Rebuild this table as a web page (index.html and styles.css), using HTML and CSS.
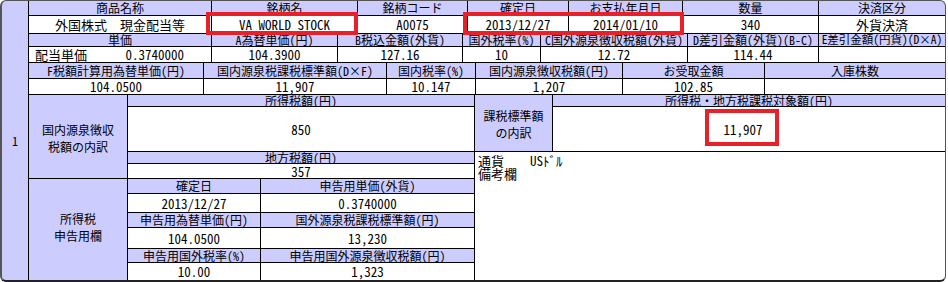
FILE: index.html
```html
<!DOCTYPE html>
<html lang="ja">
<head>
<meta charset="utf-8">
<link rel="stylesheet" href="styles.css">
</head>
<body>
<div class="wrap">
  <div class="frame">
    <div class="num">1</div>
    <div class="main">
      <div class="band band-a">
        <div class="h">商品名称</div>
        <div class="h">銘柄名</div>
        <div class="h">銘柄コード</div>
        <div class="h">確定日</div>
        <div class="h">お支払年月日</div>
        <div class="h">数量</div>
        <div class="h">決済区分</div>
        <div class="v">外国株式<span class="fw">　</span>現金配当等</div>
        <div class="v">VA WORLD STOCK</div>
        <div class="v">A0075</div>
        <div class="v">2013/12/27</div>
        <div class="v">2014/01/10</div>
        <div class="v">340</div>
        <div class="v">外貨決済</div>
      </div>
      <div class="band band-b">
        <div class="h">単価</div>
        <div class="h">A為替単価(円)</div>
        <div class="h">B税込金額(外貨)</div>
        <div class="h">国外税率(%)</div>
        <div class="h">C国外源泉徴収税額(外貨)</div>
        <div class="h">D差引金額(外貨)(B-C)</div>
        <div class="h tight">E差引金額(円貨)(D×A)</div>
        <div class="v split"><span>配当単価</span><span>0.3740000</span></div>
        <div class="v">104.3900</div>
        <div class="v">127.16</div>
        <div class="v">10</div>
        <div class="v">12.72</div>
        <div class="v">114.44</div>
        <div class="v"></div>
      </div>
      <div class="band band-c">
        <div class="h">F税額計算用為替単価(円)</div>
        <div class="h">国内源泉税課税標準額(D×F)</div>
        <div class="h">国内税率(%)</div>
        <div class="h">国内源泉徴収税額(円)</div>
        <div class="h">お受取金額</div>
        <div class="h">入庫株数</div>
        <div class="v">104.0500</div>
        <div class="v">11,907</div>
        <div class="v">10.147</div>
        <div class="v">1,207</div>
        <div class="v">102.85</div>
        <div class="v"></div>
      </div>
      <div class="band band-d">
        <div class="h label lbl-dom">国内源泉徴収<br>税額の内訳</div>
        <div class="h mid r1">所得税額(円)</div>
        <div class="v mid r2">850</div>
        <div class="h mid r3">地方税額(円)</div>
        <div class="v mid r4">357</div>

        <div class="h label lbl-base">課税標準額<br>の内訳</div>
        <div class="h rt r1">所得税・地方税課税対象額(円)</div>
        <div class="v rt r2">11,907</div>
        <div class="remarks">通貨<span class="fw">　　</span>USﾄﾞﾙ<br>備考欄</div>

        <div class="h label lbl-dec">所得税<br>申告用欄</div>
        <div class="h c2 r5">確定日</div>
        <div class="h c3 r5">申告用単価(外貨)</div>
        <div class="v c2 r6">2013/12/27</div>
        <div class="v c3 r6">0.3740000</div>
        <div class="h c2 r7">申告用為替単価(円)</div>
        <div class="h c3 r7">国外源泉税課税標準額(円)</div>
        <div class="v c2 r8">104.0500</div>
        <div class="v c3 r8">13,230</div>
        <div class="h c2 r9">申告用国外税率(%)</div>
        <div class="h c3 r9">申告用国外源泉徴収税額(円)</div>
        <div class="v c2 r10">10.00</div>
        <div class="v c3 r10">1,323</div>
      </div>
    </div>
  </div>
  <div class="mark mark-name"></div>
  <div class="mark mark-date"></div>
  <div class="mark mark-amount"></div>
</div>
</body>
</html>
```

FILE: styles.css
```css
html, body {
  margin: 0;
  padding: 0;
  background: #ffffff;
}

body {
  font-family: "Noto Sans CJK JP", "Noto Sans", sans-serif;
  font-feature-settings: "hwid" 1;
  color: #000;
}

.fw {
  font-feature-settings: normal;
}

.wrap {
  position: relative;
  width: 948px;
  height: 282px;
}

.frame {
  box-sizing: border-box;
  width: 946px;
  display: flex;
  background: #ccccff;
  border-top: 1px solid #555;
  border-right: 1px solid #555;
  border-bottom: 2px solid #222;
  border-left: 2px solid #555;
  border-radius: 6px;
  overflow: hidden;
}

.num {
  width: 26px;
  flex: none;
  border-right: 1px solid #000;
  display: flex;
  align-items: center;
  justify-content: center;
  font-size: 12px;
}

.main {
  flex: 1;
  display: flex;
  flex-direction: column;
}

.band {
  display: grid;
  gap: 1px;
  background: #000;
  border-bottom: 1px solid #000;
}

.band > div {
  display: flex;
  align-items: center;
  justify-content: center;
  line-height: 1;
  white-space: nowrap;
}

.h {
  background: #ccccff;
  font-size: 12px;
}

.band > .tight {
  font-size: 11.5px;
}

.v {
  background: #ffffff;
  font-size: 13px;
}

.band-a {
  grid-template-columns: 182px 145px 109px 100px 113px 135px 1fr;
  grid-template-rows: 14px 17px;
}

.band-b {
  grid-template-columns: 182px 125px 124px 77px 146px 130px 1fr;
  grid-template-rows: 12px 15px;
}

.band-c {
  grid-template-columns: 174px 182px 88px 146px 141px 1fr;
  grid-template-rows: 15px 15px;
}

.band > .split {
  justify-content: space-between;
  padding: 0 27px 0 6px;
}

.band-d {
  border-bottom: none;
  grid-template-columns: 98px 132px 213px 77px 1fr;
  grid-template-rows: 11px 44px 11px 14px 14px 18px 14px 20px 13px 17px;
}

.band > .label {
  flex-direction: column;
  line-height: 17px;
  text-align: center;
}

.lbl-dom { grid-column: 1; grid-row: 1 / 5; padding-top: 3px; }
.lbl-base { grid-column: 4; grid-row: 1 / 3; padding-top: 2px; }
.lbl-dec { grid-column: 1; grid-row: 5 / 11; padding-bottom: 6px; }

.mid { grid-column: 2 / 4; }
.rt { grid-column: 5; }
.c2 { grid-column: 2; }
.c3 { grid-column: 3; }

.r1 { grid-row: 1; }
.r2 { grid-row: 2; }
.r3 { grid-row: 3; }
.r4 { grid-row: 4; }
.r5 { grid-row: 5; }
.r6 { grid-row: 6; }
.r7 { grid-row: 7; }
.r8 { grid-row: 8; }
.r9 { grid-row: 9; }
.r10 { grid-row: 10; }

.band > .rt.r2 {
  padding-right: 12px;
}

.band > .remarks {
  grid-column: 4 / 6;
  grid-row: 3 / 11;
  background: #ffffff;
  display: block;
  font-size: 13px;
  line-height: 13px;
  padding: 2px 0 0 3px;
}

.mark {
  position: absolute;
  box-sizing: border-box;
  border: 4px solid #e8202a;
}

.mark-name { left: 206px; top: 12px; width: 152px; height: 23px; }
.mark-date { left: 463px; top: 12px; width: 221px; height: 23px; }
.mark-amount { left: 705px; top: 109px; width: 74px; height: 37px; }
```
